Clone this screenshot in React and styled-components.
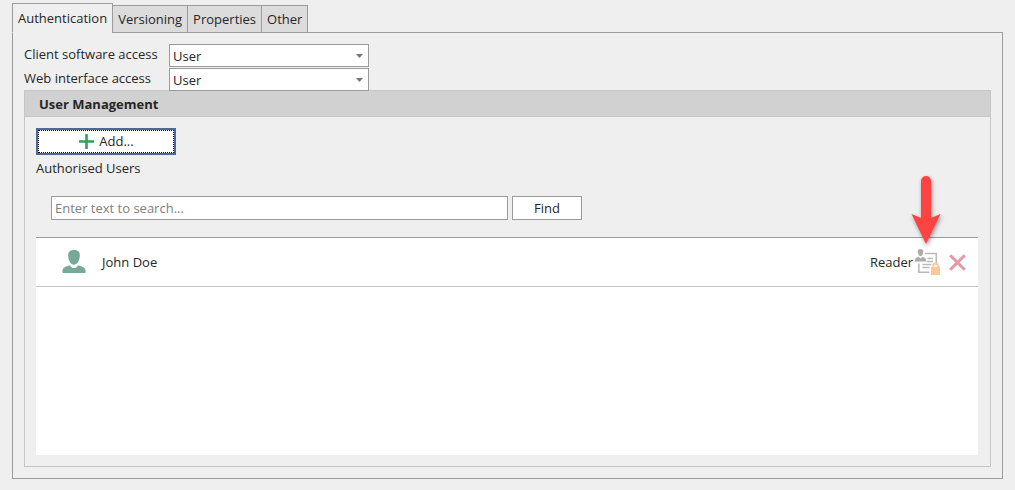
import React, { useState } from 'react';
import styled, { createGlobalStyle } from 'styled-components';

const tabs = ['Authentication', 'Versioning', 'Properties', 'Other'];

const users = [{ name: 'John Doe', role: 'Reader' }];

const App = () => {
  const [activeTab, setActiveTab] = useState('Authentication');

  return (
    <>
      <GlobalStyle />
      <Page>
        <TabList role="tablist">
          {tabs.map((tab) => (
            <Tab
              key={tab}
              type="button"
              role="tab"
              aria-selected={tab === activeTab}
              $active={tab === activeTab}
              onClick={() => setActiveTab(tab)}>
              {tab}
            </Tab>
          ))}
        </TabList>
        <TabPanel role="tabpanel">
          <AccessField id="client-access" label="Client software access" />
          <AccessField id="web-access" label="Web interface access" />
          <UserManagement />
        </TabPanel>
      </Page>
    </>
  );
};
export default App;

const AccessField = ({ id, label }) => (
  <FieldRow>
    <FieldLabel htmlFor={id}>{label}</FieldLabel>
    <SelectWrapper>
      <Select id={id} defaultValue="User">
        <option>User</option>
        <option>None</option>
      </Select>
      <SelectArrow viewBox="0 0 7 4" aria-hidden="true">
        <path d="M0 0h7L3.500 4z" fill="#777777" />
      </SelectArrow>
    </SelectWrapper>
  </FieldRow>
);

const UserManagement = () => (
  <Group>
    <GroupTitle>User Management</GroupTitle>
    <GroupBody>
      <AddButton type="button">
        <PlusIcon />
        Add...
      </AddButton>
      <ListLabel id="authorised-users">Authorised Users</ListLabel>
      <SearchForm onSubmit={(event) => event.preventDefault()}>
        <SearchInput
          type="text"
          aria-label="Search users"
          placeholder="Enter text to search..." />
        <FindButton type="submit">Find</FindButton>
      </SearchForm>
      <UserList aria-labelledby="authorised-users">
        {users.map((user) => (
          <UserRow key={user.name}>
            <PersonIcon />
            <UserName>{user.name}</UserName>
            <span>{user.role}</span>
            <IconButton type="button" aria-label="Change permissions">
              <PermissionIcon />
              <PointerArrow />
            </IconButton>
            <IconButton type="button" aria-label="Remove user">
              <RemoveIcon />
            </IconButton>
          </UserRow>
        ))}
      </UserList>
    </GroupBody>
  </Group>
);

const PlusIcon = () => (
  <svg width="16" height="16" viewBox="0 0 16 16" aria-hidden="true">
    <path d="M8.500 0v15M1 7.500h15" stroke="#3c9a5f" strokeWidth="2.600" />
  </svg>
);

const PersonIcon = () => (
  <svg width="24" height="24" viewBox="0 0 24 24" aria-hidden="true">
    <path
      d="M12 0c4 0 6.200 2.200 5.800 6.200-.4 4.600-2.600 8.500-5.800 8.500S6.600 10.800 6.200 6.200C5.800 2.200 8 0 12 0z"
      fill="#78a998" />
    <path
      d="M8 15.200c.8 1.800 2.200 2.900 4 2.900s3.200-1.100 4-2.900c4.600 1.300 7.500 2.500 7.500 5.500V23H.5v-2.300c0-3 2.900-4.200 7.500-5.500z"
      fill="#78a998" />
  </svg>
);

const PermissionIcon = () => (
  <svg width="25" height="26" viewBox="0 0 25 26" aria-hidden="true">
    <g fill="none" stroke="#bababa" strokeWidth="1.600">
      <path d="M10 4.500h11.300v10" />
      <path d="M3.800 14.500v8.800h10.500" />
      <path d="M12.500 9.500h5.500M11.500 12.500h6.500M7.500 15.500h9M7.500 18.500h7" />
    </g>
    <path
      d="M5.500 0c2 0 3 1.200 2.800 3.100C8 5.500 7 7.200 5.500 7.200S3 5.500 2.700 3.100C2.500 1.200 3.500 0 5.500 0z"
      fill="#acacae" />
    <path
      d="M3.500 7.800L5.500 9.400l2-1.600c2 .6 3.500 1.500 3.500 3.200v1.500H0V11C0 9.300 1.500 8.400 3.500 7.800z"
      fill="#acacae" />
    <path d="M18.200 19v-2a2.400 2.400 0 0 1 4.800 0v2" fill="none" stroke="#f8c998" strokeWidth="1.800" />
    <rect x="16" y="18" width="9" height="8" fill="#f8c998" />
  </svg>
);

const RemoveIcon = () => (
  <svg width="17" height="17" viewBox="0 0 17 17" aria-hidden="true">
    <path d="M1.200 1.200l14.600 14.600M15.800 1.200L1.200 15.800" stroke="#e39aa3" strokeWidth="3" />
  </svg>
);

const PointerArrow = () => (
  <Pointer viewBox="0 0 30 68" aria-hidden="true">
    <path
      d="M10 5a5 5 0 0 1 10 0v37l9.500-4L15 68 .5 38l9.500 4z"
      fill="#ff4343" />
  </Pointer>
);

const GlobalStyle = createGlobalStyle`
  * {
    box-sizing: border-box;
  }
  body {
    margin: 0;
    background: #efefef;
    color: #262626;
    font-family: "Open Sans", "Noto Sans", sans-serif;
    font-size: 13px;
    line-height: 17px;
  }
  button, input, select {
    font: inherit;
    color: inherit;
    border-radius: 0;
  }
`;

const Page = styled.main`
  padding: 3px 12px 11px;
`;

const TabList = styled.div`
  position: relative;
  display: flex;
  align-items: flex-end;
  margin-bottom: -1px;
`;

const Tab = styled.button`
  height: ${(props) => (props.$active ? 30 : 28)}px;
  padding: 0 5px;
  border: 1px solid #9b9b9b;
  border-bottom-color: ${(props) => (props.$active ? '#efefef' : '#9b9b9b')};
  background: ${(props) => (props.$active ? '#efefef' : '#dcdcdc')};

  & + & {
    margin-left: -1px;
  }
`;

const TabPanel = styled.section`
  padding: 11px;
  border: 1px solid #9b9b9b;
`;

const FieldRow = styled.div`
  display: flex;
  height: 24px;
`;

const FieldLabel = styled.label`
  width: 145px;
  padding-top: 2px;
`;

const SelectWrapper = styled.div`
  position: relative;
  width: 200px;
`;

const Select = styled.select`
  display: block;
  width: 100%;
  height: 23px;
  padding: 1px 3px 0;
  border: 1px solid #9b9b9b;
  background: #ffffff;
  appearance: none;
`;

const SelectArrow = styled.svg`
  position: absolute;
  top: 10px;
  right: 6px;
  width: 7px;
  height: 4px;
  pointer-events: none;
`;

const Group = styled.section`
  margin-top: -2px;
  border: 1px solid #c6c6c6;
`;

const GroupTitle = styled.h2`
  margin: 0;
  padding: 5px 14px 3px;
  border-bottom: 1px solid #c6c6c6;
  background: #d1d1d1;
  font-size: 13px;
  font-weight: 700;
`;

const GroupBody = styled.div`
  padding: 11px 12px 11px 11px;
`;

const AddButton = styled.button`
  display: flex;
  align-items: center;
  justify-content: center;
  gap: 5px;
  width: 140px;
  height: 27px;
  padding: 0;
  border: 2px solid #4c689d;
  background: #ffffff;
  outline: 1px dotted #000000;
  outline-offset: -3px;
`;

const ListLabel = styled.p`
  margin: 5px 0 0;
`;

const SearchForm = styled.form`
  display: flex;
  gap: 4px;
  padding: 19px 15px 17px;
`;

const SearchInput = styled.input`
  flex: 0 1 457px;
  min-width: 0;
  height: 24px;
  padding: 0 3px;
  border: 1px solid #9b9b9b;
  background: #ffffff;

  &::placeholder {
    color: #808080;
    opacity: 1;
  }
`;

const FindButton = styled.button`
  width: 70px;
  height: 24px;
  padding: 0;
  border: 1px solid #9b9b9b;
  background: #ffffff;
`;

const UserList = styled.ul`
  min-height: 218px;
  margin: 0;
  padding: 0;
  border-top: 1px solid #9b9b9b;
  background: #ffffff;
  list-style: none;
`;

const UserRow = styled.li`
  display: flex;
  align-items: center;
  height: 49px;
  padding: 0 12px 0 26px;
  border-bottom: 1px solid #c6c6c6;
`;

const UserName = styled.span`
  flex: 1;
  margin-left: 16px;
`;

const IconButton = styled.button`
  position: relative;
  display: flex;
  margin-left: 2px;
  padding: 0;
  border: 0;
  background: none;

  & + & {
    margin-left: 9px;
  }
`;

const Pointer = styled.svg`
  position: absolute;
  bottom: 31px;
  left: -4px;
  width: 30px;
  height: 68px;
  overflow: visible;
  filter: drop-shadow(1px 2px 2px rgba(0, 0, 0, 0.4));
  pointer-events: none;
`;
